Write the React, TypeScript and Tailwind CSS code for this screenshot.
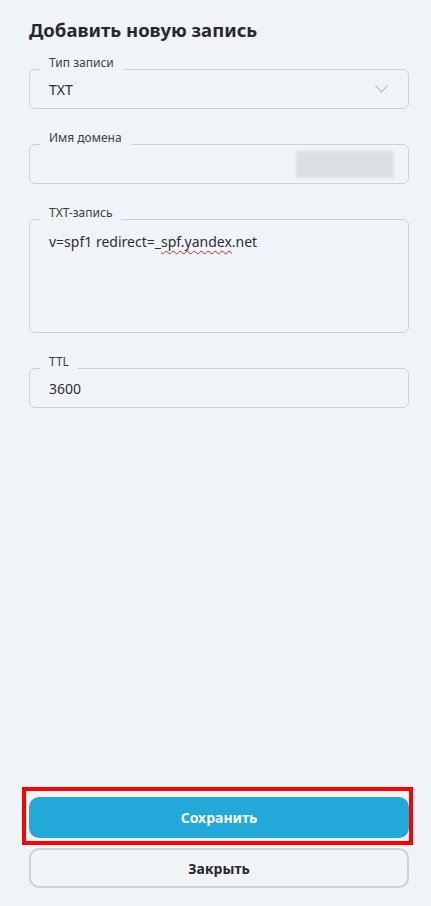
import type { ReactNode } from "react";

const FONT = { fontFamily: '"Noto Sans", "Open Sans", Arial, sans-serif' };

function Field({
  label,
  className = "h-10",
  children,
}: {
  label: string;
  className?: string;
  children?: ReactNode;
}) {
  return (
    <div className={`relative rounded-[6px] border border-[#c6d4de] ${className}`}>
      <span className="absolute -top-[15px] left-[10px] bg-[#f0f4f7] px-[9px] text-[12px] leading-[16px] text-[#3b3f44]">
        {label}
      </span>
      {children}
    </div>
  );
}

export default function App() {
  return (
    <div
      className="flex h-[906px] flex-col bg-[#f0f4f7] pb-[18px] pl-[29px] pr-[22px] pt-[17px] text-[#2b2e33]"
      style={FONT}
    >
      <h1 className="text-[18.5px] font-bold leading-[26px] text-[#26292e]">Добавить новую запись</h1>

      <div className="mt-[26px] flex flex-col gap-[35px]">
        <Field label="Тип записи">
          <div className="flex h-full items-center justify-between pl-[19px] pr-[20px] text-[14px]">
            <span>TXT</span>
            <svg width="13" height="8" viewBox="0 0 13 8" fill="none">
              <polyline points="0.5,0.5 6.5,7 12.5,0.5" stroke="#a9b2ba" strokeWidth="1.1" />
            </svg>
          </div>
        </Field>

        <Field label="Имя домена">
          <div className="flex h-full items-center justify-end pr-[14px]">
            <div className="h-[27px] w-[98px] bg-[#dcdfe2] blur-[1.5px]" />
          </div>
        </Field>

        <Field label="TXT-запись" className="h-[114px]">
          <div className="pl-[19px] pt-[12px] text-[14px] leading-[20px]">
            v=spf1 redirect=_
            <span className="underline decoration-[#e0242b] decoration-wavy decoration-1 underline-offset-[3px]">
              spf.yandex
            </span>
            .net
          </div>
        </Field>

        <Field label="TTL">
          <div className="flex h-full items-center pl-[19px] text-[14px]">3600</div>
        </Field>
      </div>

      <div className="flex-1" />

      <div className="relative">
        <div className="pointer-events-none absolute -bottom-[7px] -left-[7px] -right-[4px] -top-[10px] border-4 border-[#ff0000]" />
        <button className="flex h-[41px] w-full items-center justify-center rounded-[10px] bg-[#22a9d9] text-[14px] font-bold text-white">
          Сохранить
        </button>
      </div>
      <button className="mt-[10px] flex h-10 w-full items-center justify-center rounded-[10px] border-2 border-[#c7d2db] text-[14px] font-bold text-[#26292e]">
        Закрыть
      </button>
    </div>
  );
}
